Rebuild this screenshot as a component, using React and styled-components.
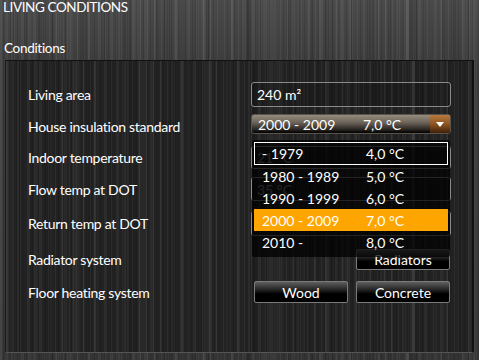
import React from "react";
import styled, { createGlobalStyle, css } from "styled-components";

const Global = createGlobalStyle`
  html, body { margin: 0; padding: 0; background: #3a3a3a; }
  body { font-family: Lato, "Open Sans", sans-serif; }
`;

const streaks = `
    repeating-linear-gradient(90deg, rgba(255,255,255,0.05) 0 1px, transparent 1px 3px, rgba(0,0,0,0.10) 3px 4px, transparent 4px 7px),
    repeating-linear-gradient(90deg, rgba(255,255,255,0.045) 0 2px, transparent 2px 11px),
    repeating-linear-gradient(90deg, rgba(0,0,0,0.14) 0 1px, transparent 1px 13px),
    repeating-linear-gradient(90deg, rgba(255,255,255,0.04) 0 3px, transparent 3px 29px),
    repeating-linear-gradient(90deg, rgba(0,0,0,0.10) 0 5px, transparent 5px 41px),
    repeating-linear-gradient(90deg, rgba(255,255,255,0.03) 0 7px, transparent 7px 67px)`;

const Page = styled.div`
  width: 479px;
  height: 360px;
  overflow: hidden;
  box-sizing: border-box;
  padding: 0 5px 0 5px;
  display: flex;
  flex-direction: column;
  background-color: #3b3b3b;
  background-image: ${streaks}, linear-gradient(#4a4a4a, #3a3a3a 20%, #333 100%);
  color: #fff;
`;

const Title = styled.div`
  font-size: 13.5px;
  line-height: 15px;
  height: 15px;
  margin-left: -2px;
  letter-spacing: -0.4px;
`;

const Section = styled.div`
  font-size: 13.5px;
  line-height: 15px;
  margin-top: 26px;
  margin-left: -1px;
  height: 19px;
  letter-spacing: -0.3px;
`;

const Panel = styled.div`
  height: 293px;
  box-sizing: border-box;
  background-color: #222;
  background-image: ${streaks};
  border-top: 1px solid #111;
  border-left: 1px solid #1b1b1b;
  border-right: 2px solid #111;
  border-bottom: 1px solid #555;
  padding: 17px 0 0 22px;
  display: flex;
  flex-direction: column;
`;

const Row = styled.div`
  display: grid;
  grid-template-columns: 223px 200px;
  align-items: center;
  height: ${(p) => p.$h}px;
  position: relative;
  z-index: ${(p) => (p.$top ? 5 : "auto")};
`;

const Label = styled.div`
  font-size: 14px;
  letter-spacing: -0.3px;
  color: #fff;
`;

const Field = styled.div`
  box-sizing: border-box;
  height: ${(p) => p.$h || 25}px;
  border: 1px solid #8a8a8a;
  border-radius: 3px;
  padding-left: 5px;
  display: flex;
  align-items: center;
  font-size: 14px;
  color: ${(p) => (p.$muted ? "#8a8a8a" : "#fff")};
  background: rgba(0,0,0,0.15);
`;

const SelectWrap = styled.div`
  position: relative;
  height: 20px;
  margin-top: -4px;
`;

const Select = styled.div`
  box-sizing: border-box;
  height: 20px;
  border-radius: 3px;
  border: 1px solid #5a544c;
  background: linear-gradient(#958b7e 0%, #6e665c 40%, #2a2622 80%, #000 100%);
  display: flex;
  align-items: center;
  padding-left: 6px;
  font-size: 14px;
  overflow: hidden;
`;

const Cell = styled.span`
  width: ${(p) => p.$w}px;
  flex: none;
`;

const Arrow = styled.div`
  margin-left: auto;
  width: 20px;
  height: 100%;
  background: linear-gradient(#b87a3c 0%, #8e5524 50%, #3e2008 100%);
  display: flex;
  align-items: center;
  justify-content: center;
`;

const Dropdown = styled.div`
  position: absolute;
  top: 26px;
  left: 1px;
  width: 198px;
  box-sizing: border-box;
  padding: 2px 2px 4px 2px;
  background: rgba(0,0,0,0.74);
  border-radius: 2px;
`;

const Item = styled.div`
  box-sizing: border-box;
  height: ${(p) => (p.$first ? 23 : 22)}px;
  display: flex;
  align-items: center;
  padding-left: 7px;
  font-size: 14px;
  color: #fff;
  background: ${(p) => (p.$active ? "#ffa500" : "transparent")};
  border: 1px solid ${(p) => (p.$focus ? "#fff" : "transparent")};
`;

const Buttons = styled.div`
  display: flex;
  justify-content: ${(p) => (p.$end ? "flex-end" : "flex-start")};
  gap: 8px;
  padding-left: 3px;
  padding-right: 1px;
`;

const Button = styled.div`
  box-sizing: border-box;
  width: 94px;
  height: ${(p) => p.$h || 22}px;
  border: 1px solid #7a7a7a;
  border-radius: 2px;
  background: linear-gradient(#5e5e5e 0%, #2a2a2a 35%, #000 60%, #000 100%);
  display: flex;
  align-items: center;
  justify-content: center;
  font-size: 14px;
  color: #fff;
`;

const options = [
  ["- 1979", "4,0 °C"],
  ["1980 - 1989", "5,0 °C"],
  ["1990 - 1999", "6,0 °C"],
  ["2000 - 2009", "7,0 °C"],
  ["2010 -", "8,0 °C"],
];

export default function App() {
  return (
    <>
      <Global />
      <Page>
        <Title>LIVING CONDITIONS</Title>
        <Section>Conditions</Section>
        <Panel>
          <Row $h={32}>
            <Label>Living area</Label>
            <Field>240 m²</Field>
          </Row>
          <Row $h={32} $top>
            <Label>House insulation standard</Label>
            <SelectWrap>
              <Select>
                <Cell $w={105}>2000 - 2009</Cell>
                <Cell $w={60}>7,0 °C</Cell>
                <Arrow>
                  <svg width="8" height="5" viewBox="0 0 8 5">
                    <path d="M0 0H8L4 5Z" fill="#fff" />
                  </svg>
                </Arrow>
              </Select>
              <Dropdown>
                {options.map(([a, b], i) => (
                  <Item key={a} $first={i === 0} $focus={i === 0} $active={i === 3}>
                    <Cell $w={104}>{a}</Cell>
                    <Cell $w={60}>{b}</Cell>
                  </Item>
                ))}
              </Dropdown>
            </SelectWrap>
          </Row>
          <Row $h={30}>
            <Label>Indoor temperature</Label>
            <Field $h={23} $muted>21 °C</Field>
          </Row>
          <Row $h={34}>
            <Label>Flow temp at DOT</Label>
            <Field $h={24} $muted>35 °C</Field>
          </Row>
          <Row $h={34}>
            <Label>Return temp at DOT</Label>
            <Field $h={25} $muted>30 °C</Field>
          </Row>
          <Row $h={38}>
            <Label>Radiator system</Label>
            <Buttons $end>
              <Button $h={21}>Radiators</Button>
            </Buttons>
          </Row>
          <Row $h={28}>
            <Label>Floor heating system</Label>
            <Buttons>
              <Button>Wood</Button>
              <Button>Concrete</Button>
            </Buttons>
          </Row>
        </Panel>
      </Page>
    </>
  );
}
